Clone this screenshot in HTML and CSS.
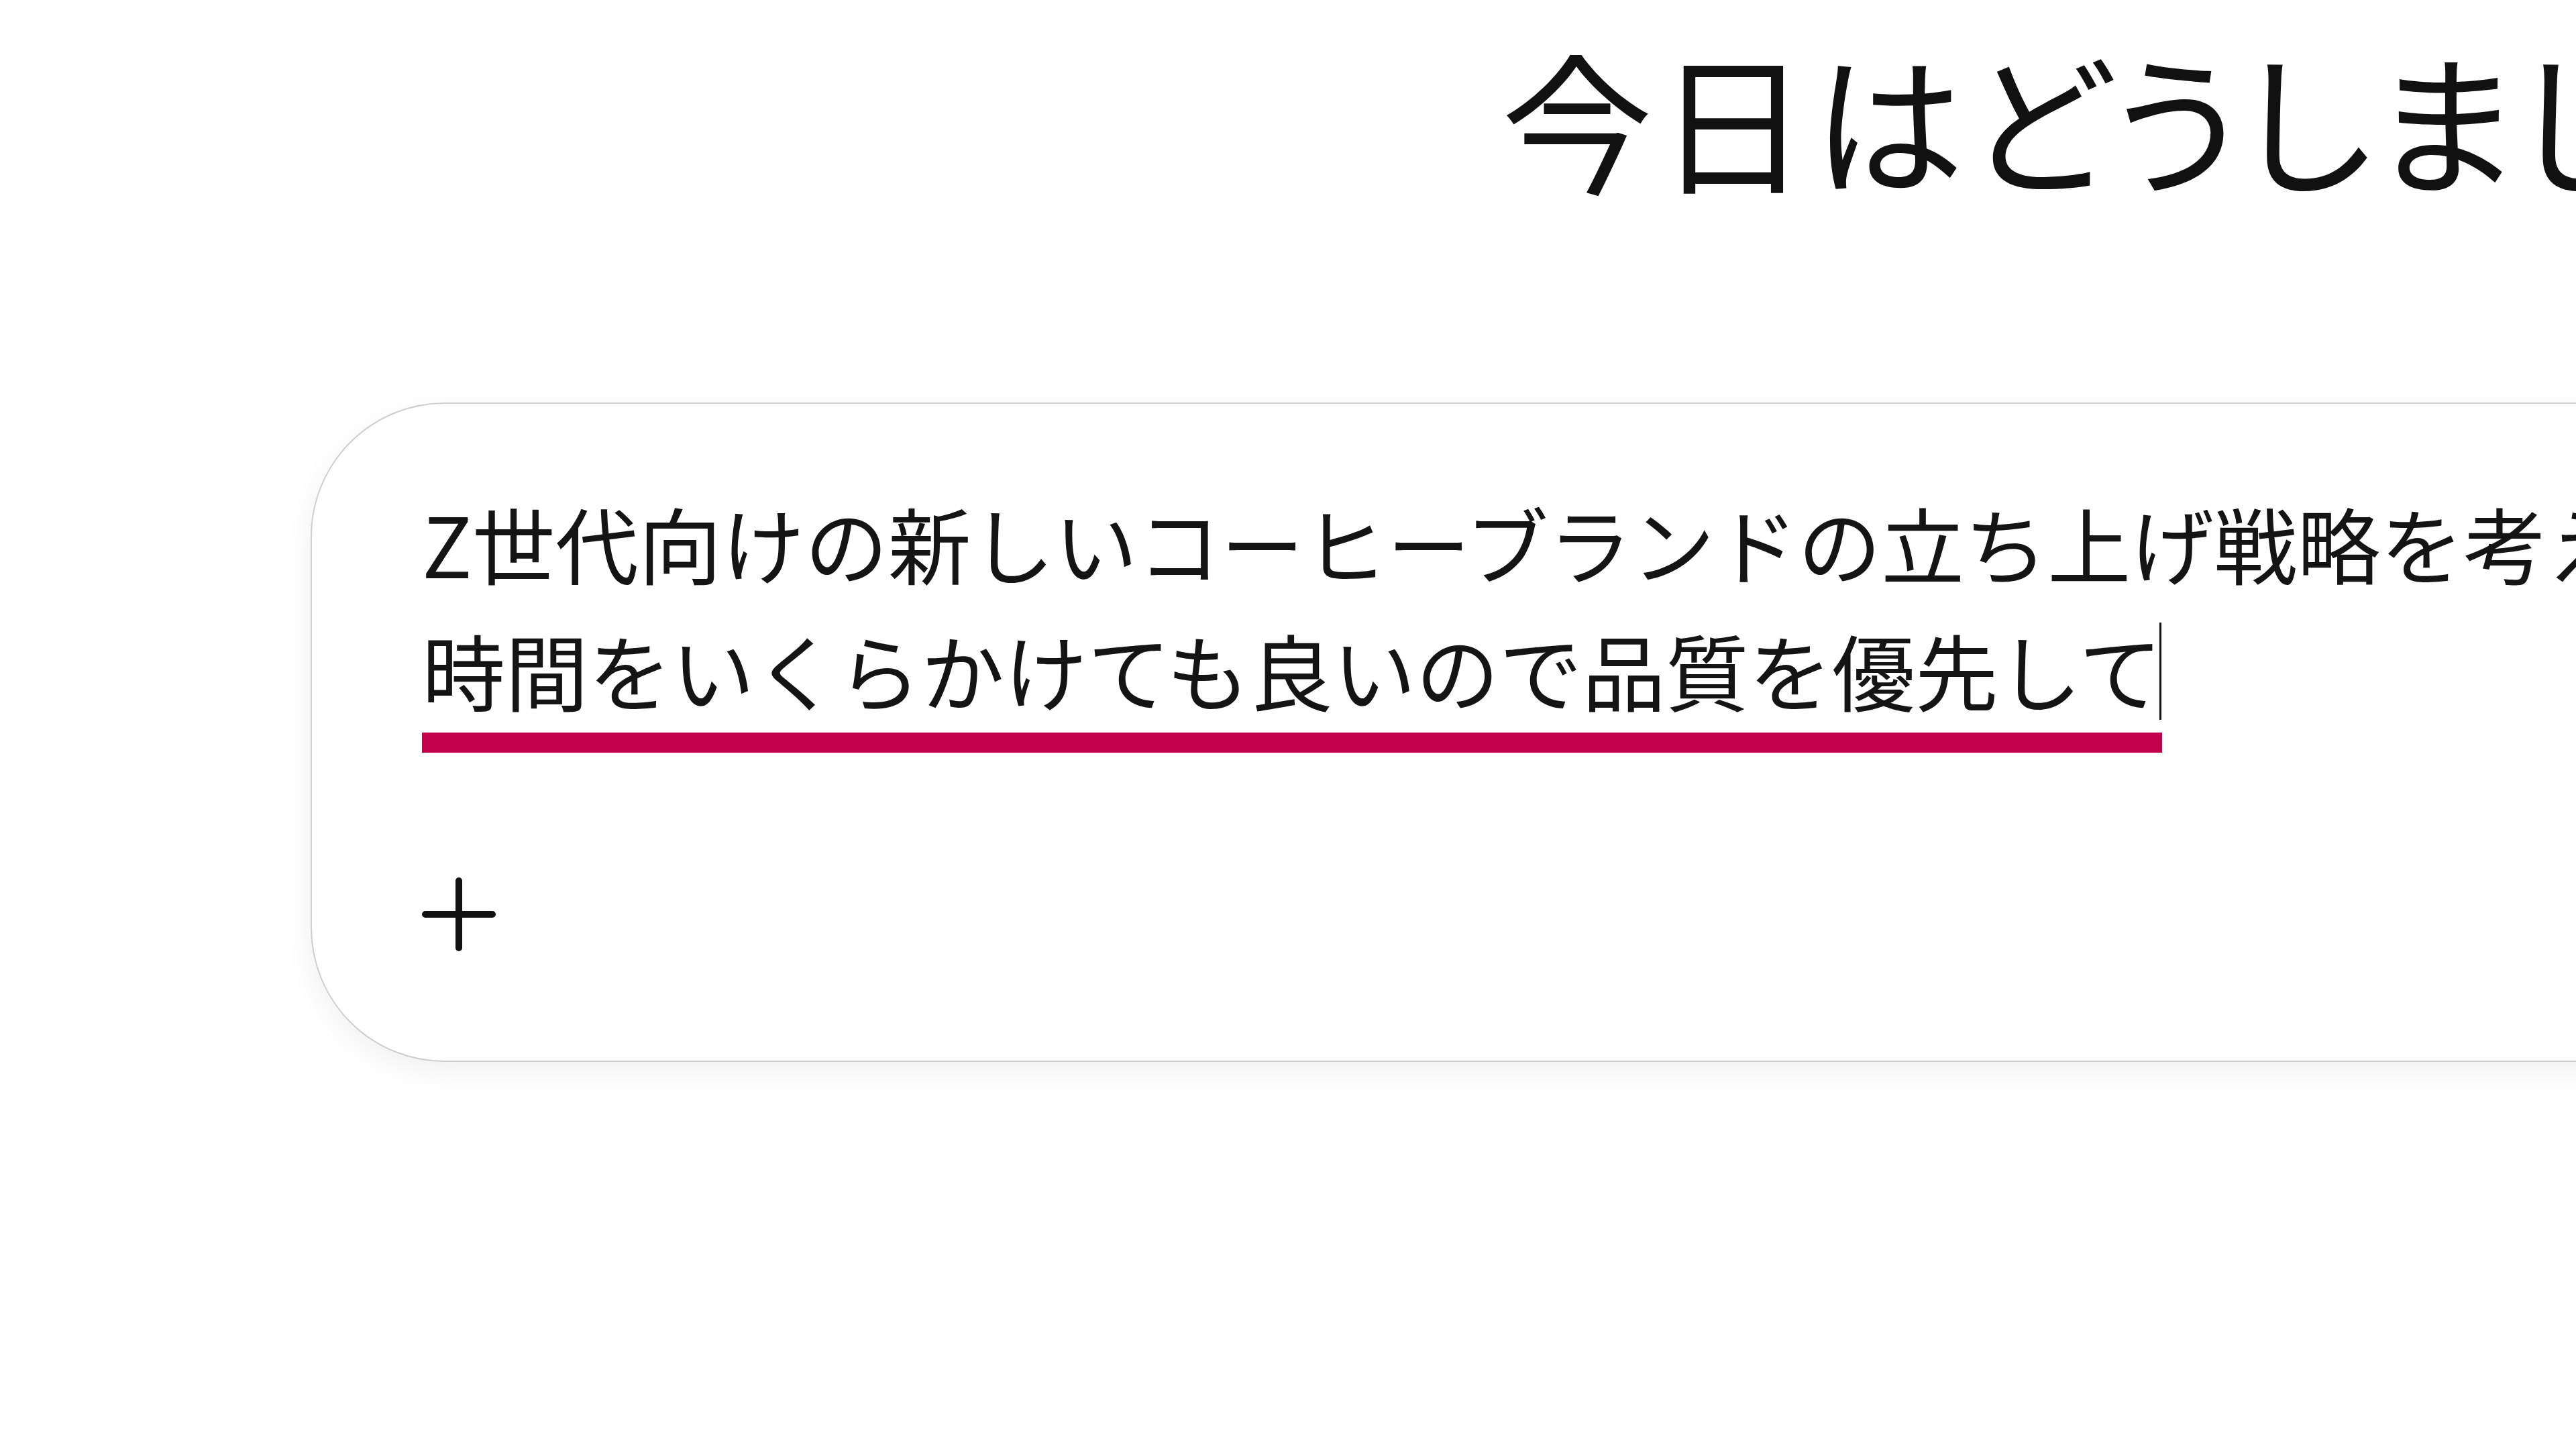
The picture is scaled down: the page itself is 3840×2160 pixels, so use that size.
FILE: index.html
```html
<!DOCTYPE html>
<html lang="ja">
<head>
    <meta charset="UTF-8">
    <meta name="viewport" content="width=device-width, initial-scale=1.0">
    <title>チャット</title>
    <link rel="stylesheet" href="styles.css">
</head>
<body>
    <div class="page">
        <h1 class="greeting">今日はどうしましょうか？</h1>

        <div class="composer">
            <div class="prompt">
                <div class="prompt-line">Z世代向けの新しいコーヒーブランドの立ち上げ戦略を考えてください。</div>
                <div class="prompt-line">
                    <span class="composing">時間をいくらかけても良いので品質を優先して</span>
                    <span class="caret"></span>
                </div>
            </div>

            <div class="tools">
                <button class="tool-btn" aria-label="追加">
                    <svg width="110" height="110" viewBox="0 0 110 110" fill="none" stroke="currentColor" stroke-width="10" stroke-linecap="round">
                        <path d="M55 5V105M5 55H105"/>
                    </svg>
                </button>
            </div>
        </div>
    </div>
</body>
</html>
```

FILE: styles.css
```css
* {
    margin: 0;
    padding: 0;
    box-sizing: border-box;
}

html, body {
    width: 3840px;
    height: 2160px;
    overflow: hidden;
    background: #ffffff;
}

body {
    font-family: "Noto Sans CJK JP", "Noto Sans", sans-serif;
    color: #141414;
}

.page {
    width: 7000px;
}

.greeting {
    padding-top: 25px;
    padding-left: 2238px;
    font-size: 226px;
    font-weight: 400;
    line-height: 300px;
    white-space: nowrap;
    font-feature-settings: "palt";
    letter-spacing: 6px;
    color: #111111;
}

.composer {
    width: 6000px;
    margin-top: 275px;
    margin-left: 463px;
    padding: 112px 0 163px 164px;
    border: 2px solid #cfcfcf;
    border-radius: 200px;
    background: #ffffff;
    box-shadow: 0 14px 40px rgba(0, 0, 0, 0.06);
}

.prompt {
    font-size: 124px;
    line-height: 189px;
}

.prompt-line {
    display: flex;
    align-items: flex-start;
    white-space: nowrap;
}

.composing {
    display: block;
    border-bottom: 30px solid #c2024c;
}

.caret {
    width: 3px;
    height: 145px;
    margin-top: 25px;
    margin-left: -4px;
    background: #111;
}

.tools {
    display: flex;
    margin-top: 186px;
}

.tool-btn {
    display: flex;
    border: none;
    background: none;
    color: #111;
    cursor: pointer;
}
```
